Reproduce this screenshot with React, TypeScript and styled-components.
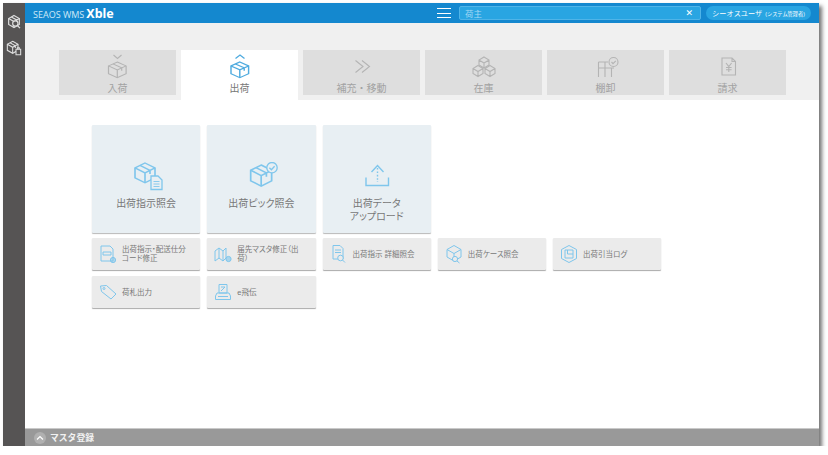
import React from 'react';
import styled, { createGlobalStyle } from 'styled-components';

const GlobalStyle = createGlobalStyle`
  html, body { margin: 0; padding: 0; background: #fff; }
  body { font-family: "Liberation Sans", "Noto Sans CJK JP", sans-serif; }
`;

const BLUE = '#7fc6ec';

const BoxLines = () => (
  <>
    <path d="M12 3 L20 7.5 V16.5 L12 21 L4 16.5 V7.5 Z" />
    <path d="M4 7.5 L12 12 L20 7.5 M12 12 V21 M8 5.2 L16 9.7 V13" />
  </>
);

const TabIcon = ({ kind, color }: { kind: string; color: string }) => (
  <svg width="26" height="32" viewBox="0 0 26 32" fill="none" stroke={color} strokeWidth="1.1">
    {kind === 'in' && (
      <>
        <path d="M8.5 3 L12.5 6.5 L16.5 3" />
        <g transform="translate(-0.9,7.4) scale(1.1,0.87)"><BoxLines /></g>
      </>
    )}
    {kind === 'out' && (
      <>
        <path d="M8.5 6.5 L13 3 L17.5 6.5" strokeWidth="1.3" />
        <g transform="translate(-0.4,7.4) scale(1.1,0.87)" strokeWidth="1.3"><BoxLines /></g>
      </>
    )}
    {kind === 'move' && <path d="M6.5 8.5 L14 14.5 L6.5 20.5 M13 8.5 L20.5 14.5 L13 20.5" />}
    {kind === 'stock' && (
      <>
        <path d="M13 5 L18 8 V13 L13 16 L8 13 V8 Z M8 8 L13 11 L18 8 M13 11 V16" />
        <path d="M7 13.5 L12 16.5 V21.5 L7 24.5 L2 21.5 V16.5 Z M2 16.5 L7 19.5 L12 16.5 M7 19.5 V24.5" />
        <path d="M19 13.5 L24 16.5 V21.5 L19 24.5 L14 21.5 V16.5 Z M14 16.5 L19 19.5 L24 16.5 M19 19.5 V24.5" />
      </>
    )}
    {kind === 'count' && (
      <>
        <path d="M5.5 10 H15 M5.5 16 H21 M5.5 10 V25 M12 10 V25 M18.5 16 V25" />
        <circle cx="20.5" cy="10" r="4.5" />
        <path d="M18.5 10 L20 11.6 L22.8 8.8" />
      </>
    )}
    {kind === 'bill' && (
      <>
        <path d="M7 6 H17 L20.5 9.5 V23 H7 Z M17 6 V9.5 H20.5" />
        <path d="M11 11 L13.8 14.5 L16.6 11 M13.8 14.5 V20 M11 15.5 H16.6 M11 17.8 H16.6" />
      </>
    )}
  </svg>
);

const BigIcon = ({ kind }: { kind: string }) => (
  <svg width="34" height="30" viewBox="0 0 34 30" fill="none" stroke={BLUE} strokeWidth="1.3">
    {kind === 'doc' && (
      <>
        <g transform="translate(1,-2.3) scale(1.25,1.1)"><BoxLines /></g>
        <path d="M22 14 H29 L33 18 V27.5 H22 Z" fill="#e8eff3" />
        <path d="M24.5 19.5 H30.5 M24.5 22 H30.5 M24.5 24.5 H30.5" strokeWidth="0.9" />
      </>
    )}
    {kind === 'check' && (
      <>
        <g transform="translate(1.45,-0.5) scale(1.31,1.17)"><BoxLines /></g>
        <circle cx="28" cy="5.7" r="5.2" fill="#e8eff3" />
        <path d="M25.4 5.7 L27.4 7.7 L30.6 4.2" />
      </>
    )}
    {kind === 'upload' && (
      <>
        <path d="M6 15.5 V23.5 H28.5 V15.5" strokeWidth="1.4" />
        <path d="M11.5 10 L17.5 3.5 L23.5 10" strokeWidth="1.4" />
        <path d="M17.5 6 V20" strokeDasharray="1.6 1.8" strokeWidth="1.4" />
      </>
    )}
  </svg>
);

const SmallIcon = ({ kind }: { kind: string }) => (
  <svg width="18" height="20" viewBox="0 0 18 20" fill="none" stroke={BLUE} strokeWidth="1">
    {kind === 'csv' && (
      <>
        <path d="M2 2 H11 L14 5 V17 H2 Z" />
        <path d="M4 8 H12 V11 H4 Z" />
        <circle cx="14" cy="16" r="2.6" fill={BLUE} fillOpacity=".5" />
      </>
    )}
    {kind === 'map' && (
      <>
        <path d="M1 7 L5 4 L9 7 L12 4 V14 L9 17 L5 14 L1 17 Z M5 4 V14 M9 7 V17" />
        <circle cx="14.5" cy="15" r="2.6" fill={BLUE} fillOpacity=".6" />
      </>
    )}
    {kind === 'search' && (
      <>
        <path d="M3 1.5 H10 L13 4.5 V15 H3 Z M5 6 H11 M5 8.5 H11" />
        <circle cx="10.5" cy="14" r="2.8" fill="#ebebeb" />
        <path d="M12.5 16 L15 18.5" />
      </>
    )}
    {kind === 'case' && (
      <>
        <path d="M9 1.5 L16 5.5 V13 L9 17 L2 13 V5.5 Z M2 5.5 L9 9.5 L16 5.5 M9 9.5 V17" />
        <circle cx="10" cy="15" r="2.6" fill="#ebebeb" />
        <path d="M12 17 L14.5 19" />
      </>
    )}
    {kind === 'log' && (
      <>
        <path d="M9 1.5 L16.5 5.5 V14.5 L9 18.5 L1.5 14.5 V5.5 Z" />
        <path d="M5 6 H13 V14 H5 Z M7.5 6 V10 H13" />
      </>
    )}
    {kind === 'tag' && (
      <>
        <path d="M1.5 4 L7.5 3.5 L17 12 L12 17 L2.5 9.5 Z" />
        <circle cx="5" cy="6.5" r="1" />
      </>
    )}
    {kind === 'hikyaku' && (
      <>
        <path d="M5 2.5 H13 V11 H5 Z M7 5 H11 M7 9 L11 5" />
        <path d="M3 11 H15 L16.5 14 V17.5 H1.5 V14 Z M4 14.5 H14" />
      </>
    )}
  </svg>
);

const Shell = styled.div`
  display: flex;
  width: 816px;
  height: 443px;
  margin: 3px 0 0 3px;
  box-shadow: 3px 3px 4px rgba(0, 0, 0, 0.55);
  overflow: hidden;
`;

const SideBar = styled.aside`
  width: 22px;
  flex: none;
  background: #565454;
  display: flex;
  flex-direction: column;
  align-items: center;
  gap: 10px;
  padding-top: 10px;
  box-sizing: border-box;
`;

const Main = styled.div`
  flex: 1;
  min-width: 0;
  display: flex;
  flex-direction: column;
`;

const TopBar = styled.header`
  height: 20px;
  flex: none;
  background: #1488cf;
  display: flex;
  align-items: center;
  color: #fff;
  padding-left: 8px;
`;

const Logo = styled.div`
  display: flex;
  align-items: baseline;
  width: 404px;
  font-family: "Open Sans", sans-serif;
  font-size: 9px;
  color: #cfe8f7;
  white-space: nowrap;
`;

const LogoStrong = styled.span`
  font-family: "Noto Sans", sans-serif;
  font-size: 12.5px;
  font-weight: 700;
  color: #fff;
  margin-left: 2px;
`;

const Burger = styled.div`
  width: 14px;
  height: 10px;
  flex: none;
  border-top: 1.4px solid #fff;
  border-bottom: 1.4px solid #fff;
  box-sizing: border-box;
  display: flex;
  align-items: center;
  &::before {
    content: '';
    width: 100%;
    border-top: 1.4px solid #fff;
  }
`;

const SearchBox = styled.div`
  width: 242px;
  height: 14px;
  margin-left: 8px;
  flex: none;
  box-sizing: border-box;
  background: #29a5e2;
  border: 1px solid #4fb4e8;
  border-radius: 2px;
  display: flex;
  align-items: center;
  justify-content: space-between;
  padding: 0 7px 0 5px;
  font-size: 8.5px;
  color: #a5d8f4;
`;

const ClearMark = styled.span`
  font-family: "DejaVu Sans", sans-serif;
  font-size: 9px;
  font-weight: 700;
  color: #fff;
`;

const UserPill = styled.div`
  width: 105px;
  height: 14px;
  margin-left: 5px;
  flex: none;
  border-radius: 7px;
  background: #29a5e2;
  display: flex;
  align-items: center;
  justify-content: center;
  font-size: 7.2px;
  color: #fff;
  white-space: nowrap;
`;

const UserRole = styled.span`
  font-size: 5.2px;
  margin-left: 3px;
`;

const TabBand = styled.nav`
  height: 77px;
  flex: none;
  box-sizing: border-box;
  background: #f0f0f0;
  padding: 27px 0 0 34px;
  display: flex;
  align-items: flex-start;
  gap: 5px;
`;

const TabItem = styled.div<{ $active?: boolean }>`
  width: 117px;
  height: ${(p) => (p.$active ? 50 : 45)}px;
  box-sizing: border-box;
  padding-top: 2px;
  background: ${(p) => (p.$active ? '#fff' : '#dedede')};
  color: ${(p) => (p.$active ? '#777' : '#a2a2a2')};
  display: flex;
  flex-direction: column;
  align-items: center;
  font-size: 10px;
  line-height: 12px;
  svg { display: block; margin-bottom: -1px; }
`;

const Content = styled.main`
  flex: 1;
  background: #fff;
  padding: 25px 0 0 67px;
  display: grid;
  grid-template-columns: repeat(5, 108.25px);
  grid-auto-rows: min-content;
  column-gap: 7px;
  font-feature-settings: "palt";
`;

const BigCard = styled.div`
  height: 108px;
  margin-bottom: 5px;
  box-sizing: border-box;
  background: #e8eff3;
  border-radius: 1px;
  box-shadow: 0 1px 1px #b9b9b9;
  padding-top: 37px;
  display: flex;
  flex-direction: column;
  align-items: center;
  text-align: center;
  font-size: 10px;
  line-height: 13px;
  color: #777;
  svg { display: block; margin-bottom: 5px; }
`;

const SmallCard = styled.div`
  height: 32px;
  margin-bottom: 6px;
  box-sizing: border-box;
  background: #ebebeb;
  border-radius: 1px;
  box-shadow: 0 1px 1px #aaa;
  padding-left: 7px;
  display: flex;
  align-items: center;
  gap: 5px;
  font-size: 7.5px;
  line-height: 9px;
  color: #777;
`;

const SmallLabel = styled.span`
  width: 66px;
`;

const FootBar = styled.footer`
  height: 18px;
  flex: none;
  box-sizing: border-box;
  background: #999;
  border-top: 1px solid #c9c9c9;
  padding-left: 9px;
  display: flex;
  align-items: center;
  gap: 4px;
  color: #f2f2f2;
  font-size: 8.8px;
  font-weight: 700;
`;

const FootToggle = styled.span`
  width: 12px;
  height: 12px;
  border-radius: 50%;
  background: #b0b0b0;
  display: flex;
  align-items: center;
  justify-content: center;
`;

const tabs = [
  { kind: 'in', label: '入荷' },
  { kind: 'out', label: '出荷', active: true },
  { kind: 'move', label: '補充・移動' },
  { kind: 'stock', label: '在庫' },
  { kind: 'count', label: '棚卸' },
  { kind: 'bill', label: '請求' },
];

const bigCards = [
  { kind: 'doc', label: ['出荷指示照会'] },
  { kind: 'check', label: ['出荷ピック照会'] },
  { kind: 'upload', label: ['出荷データ', 'アップロード'] },
];

const smallCards = [
  { kind: 'csv', label: '出荷指示・配送仕分コード修正' },
  { kind: 'map', label: '届先マスタ修正（出荷）' },
  { kind: 'search', label: '出荷指示 詳細照会' },
  { kind: 'case', label: '出荷ケース照会' },
  { kind: 'log', label: '出荷引当ログ' },
  { kind: 'tag', label: '荷札出力' },
  { kind: 'hikyaku', label: 'e飛伝' },
];

export default function App() {
  return (
    <>
      <GlobalStyle />
      <Shell>
        <SideBar>
          <svg width="16" height="17" viewBox="0 0 24 24" fill="none" stroke="#ddd" strokeWidth="1.8">
            <BoxLines />
            <circle cx="14" cy="15" r="4" fill="#565454" />
            <path d="M17 18 L21 22" />
          </svg>
          <svg width="16" height="16" viewBox="0 0 24 24" fill="none" stroke="#ddd" strokeWidth="1.6">
            <g transform="translate(-2,-1)"><BoxLines /></g>
            <path d="M15 14 H22 V22 H15 Z" fill="#565454" />
            <path d="M17 14 V11.5 H20 V14" />
          </svg>
        </SideBar>
        <Main>
          <TopBar>
            <Logo>
              SEAOS WMS<LogoStrong>Xble</LogoStrong>
            </Logo>
            <Burger />
            <SearchBox>
              荷主
              <ClearMark>✕</ClearMark>
            </SearchBox>
            <UserPill>
              シーオスユーザ<UserRole>(システム管理者)</UserRole>
            </UserPill>
          </TopBar>
          <TabBand>
            {tabs.map((tab) => (
              <TabItem key={tab.kind} $active={tab.active}>
                <TabIcon kind={tab.kind} color={tab.active ? '#4fabdf' : '#b4b4b4'} />
                {tab.label}
              </TabItem>
            ))}
          </TabBand>
          <Content>
            {bigCards.map((card) => (
              <BigCard key={card.kind}>
                <BigIcon kind={card.kind} />
                {card.label.map((line) => (
                  <span key={line}>{line}</span>
                ))}
              </BigCard>
            ))}
            <span />
            <span />
            {smallCards.map((card) => (
              <SmallCard key={card.kind}>
                <SmallIcon kind={card.kind} />
                <SmallLabel>{card.label}</SmallLabel>
              </SmallCard>
            ))}
          </Content>
          <FootBar>
            <FootToggle>
              <svg width="8" height="6" viewBox="0 0 8 6" fill="none" stroke="#fff" strokeWidth="1.2">
                <path d="M1 4.5 L4 1.5 L7 4.5" />
              </svg>
            </FootToggle>
            マスタ登録
          </FootBar>
        </Main>
      </Shell>
    </>
  );
}
